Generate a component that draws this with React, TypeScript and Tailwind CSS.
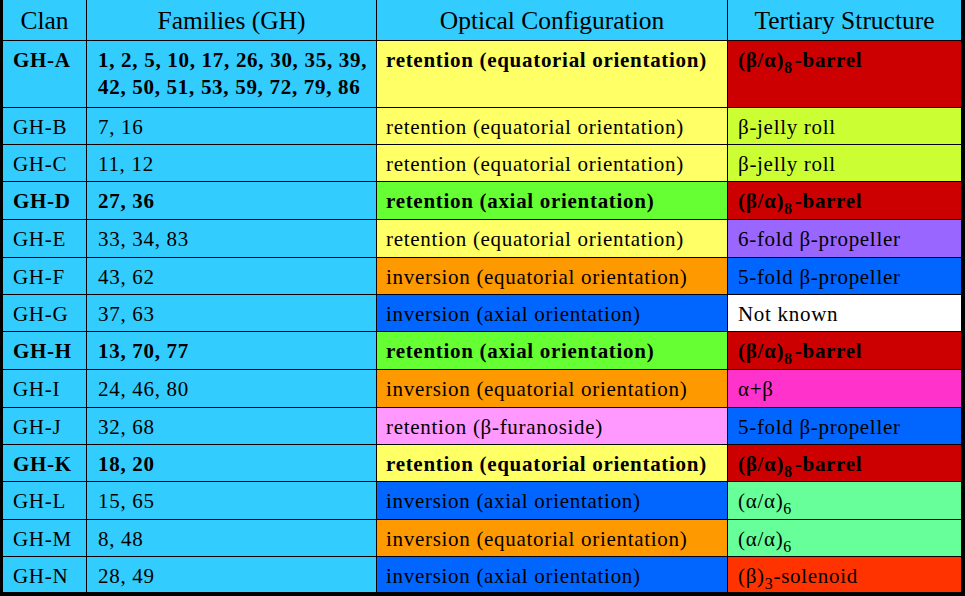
import type { ReactNode } from "react";

type Row = {
  clan: string;
  families: ReactNode;
  optical: string;
  opticalBg: string;
  tertiary: ReactNode;
  tertiaryBg: string;
  bold?: boolean;
};

const Sub = ({ children }: { children: ReactNode }) => (
  <span className="align-[-6px] text-[16px] leading-none">{children}</span>
);

const barrel = (
  <>
    (β/α)<Sub>8</Sub>
    <span className="ml-[2px]">-barrel</span>
  </>
);

const alphaAlpha = (
  <>
    (α/α)<Sub>6</Sub>
  </>
);

const rows: Row[] = [
  {
    clan: "GH-A",
    families: (
      <>
        1, 2, 5, 10, 17, 26, 30, 35, 39,
        <br />
        42, 50, 51, 53, 59, 72, 79, 86
      </>
    ),
    optical: "retention (equatorial orientation)",
    opticalBg: "bg-[#ffff66]",
    tertiary: barrel,
    tertiaryBg: "bg-[#cc0000]",
    bold: true,
  },
  { clan: "GH-B", families: "7, 16", optical: "retention (equatorial orientation)", opticalBg: "bg-[#ffff66]", tertiary: "β-jelly roll", tertiaryBg: "bg-[#ccff33]" },
  { clan: "GH-C", families: "11, 12", optical: "retention (equatorial orientation)", opticalBg: "bg-[#ffff66]", tertiary: "β-jelly roll", tertiaryBg: "bg-[#ccff33]" },
  { clan: "GH-D", families: "27, 36", optical: "retention (axial orientation)", opticalBg: "bg-[#66ff33]", tertiary: barrel, tertiaryBg: "bg-[#cc0000]", bold: true },
  { clan: "GH-E", families: "33, 34, 83", optical: "retention (equatorial orientation)", opticalBg: "bg-[#ffff66]", tertiary: "6-fold β-propeller", tertiaryBg: "bg-[#9966ff]" },
  { clan: "GH-F", families: "43, 62", optical: "inversion (equatorial orientation)", opticalBg: "bg-[#ff9900]", tertiary: "5-fold β-propeller", tertiaryBg: "bg-[#0066ff]" },
  { clan: "GH-G", families: "37, 63", optical: "inversion (axial orientation)", opticalBg: "bg-[#0066ff]", tertiary: "Not known", tertiaryBg: "bg-white" },
  { clan: "GH-H", families: "13, 70, 77", optical: "retention (axial orientation)", opticalBg: "bg-[#66ff33]", tertiary: barrel, tertiaryBg: "bg-[#cc0000]", bold: true },
  { clan: "GH-I", families: "24, 46, 80", optical: "inversion (equatorial orientation)", opticalBg: "bg-[#ff9900]", tertiary: "α+β", tertiaryBg: "bg-[#ff33cc]" },
  { clan: "GH-J", families: "32, 68", optical: "retention (β-furanoside)", opticalBg: "bg-[#ff99ff]", tertiary: "5-fold β-propeller", tertiaryBg: "bg-[#0066ff]" },
  { clan: "GH-K", families: "18, 20", optical: "retention (equatorial orientation)", opticalBg: "bg-[#ffff66]", tertiary: barrel, tertiaryBg: "bg-[#cc0000]", bold: true },
  { clan: "GH-L", families: "15, 65", optical: "inversion (axial orientation)", opticalBg: "bg-[#0066ff]", tertiary: alphaAlpha, tertiaryBg: "bg-[#66ff99]" },
  { clan: "GH-M", families: "8, 48", optical: "inversion (equatorial orientation)", opticalBg: "bg-[#ff9900]", tertiary: alphaAlpha, tertiaryBg: "bg-[#66ff99]" },
  {
    clan: "GH-N",
    families: "28, 49",
    optical: "inversion (axial orientation)",
    opticalBg: "bg-[#0066ff]",
    tertiary: (
      <>
        (β)<Sub>3</Sub>-solenoid
      </>
    ),
    tertiaryBg: "bg-[#ff3300]",
  },
];

const headers = ["Clan", "Families (GH)", "Optical Configuration", "Tertiary Structure"];

export default function App() {
  return (
    <div className="w-[965px] h-[596px] bg-black pl-[3px] pr-[4px] pb-[4px] font-[Liberation_Serif,serif] text-black">
      <div className="grid grid-cols-[83px_289px_350px_233px] grid-rows-[40px_66px_36px_36px_37px_37px_36px_36px_37px_37px_36px_36px_37px_36px_35px] gap-px">
        {headers.map((h) => (
          <div key={h} className="bg-[#33ccff] flex items-center justify-center pt-[2px] text-[25.5px] leading-none">
            {h}
          </div>
        ))}
        {rows.map((r) => {
          const cell = `pt-[6px] text-[21px] leading-[27px] tracking-[0.7px] whitespace-nowrap ${r.bold ? "font-bold" : ""}`;
          return (
            <div key={r.clan} className="contents">
              <div className={`bg-[#33ccff] pl-[10px] ${cell}`}>{r.clan}</div>
              <div className={`bg-[#33ccff] pl-[11px] ${cell}`}>{r.families}</div>
              <div className={`${r.opticalBg} pl-[9px] ${cell}`}>{r.optical}</div>
              <div className={`${r.tertiaryBg} pl-[10px] ${cell}`}>{r.tertiary}</div>
            </div>
          );
        })}
      </div>
    </div>
  );
}
